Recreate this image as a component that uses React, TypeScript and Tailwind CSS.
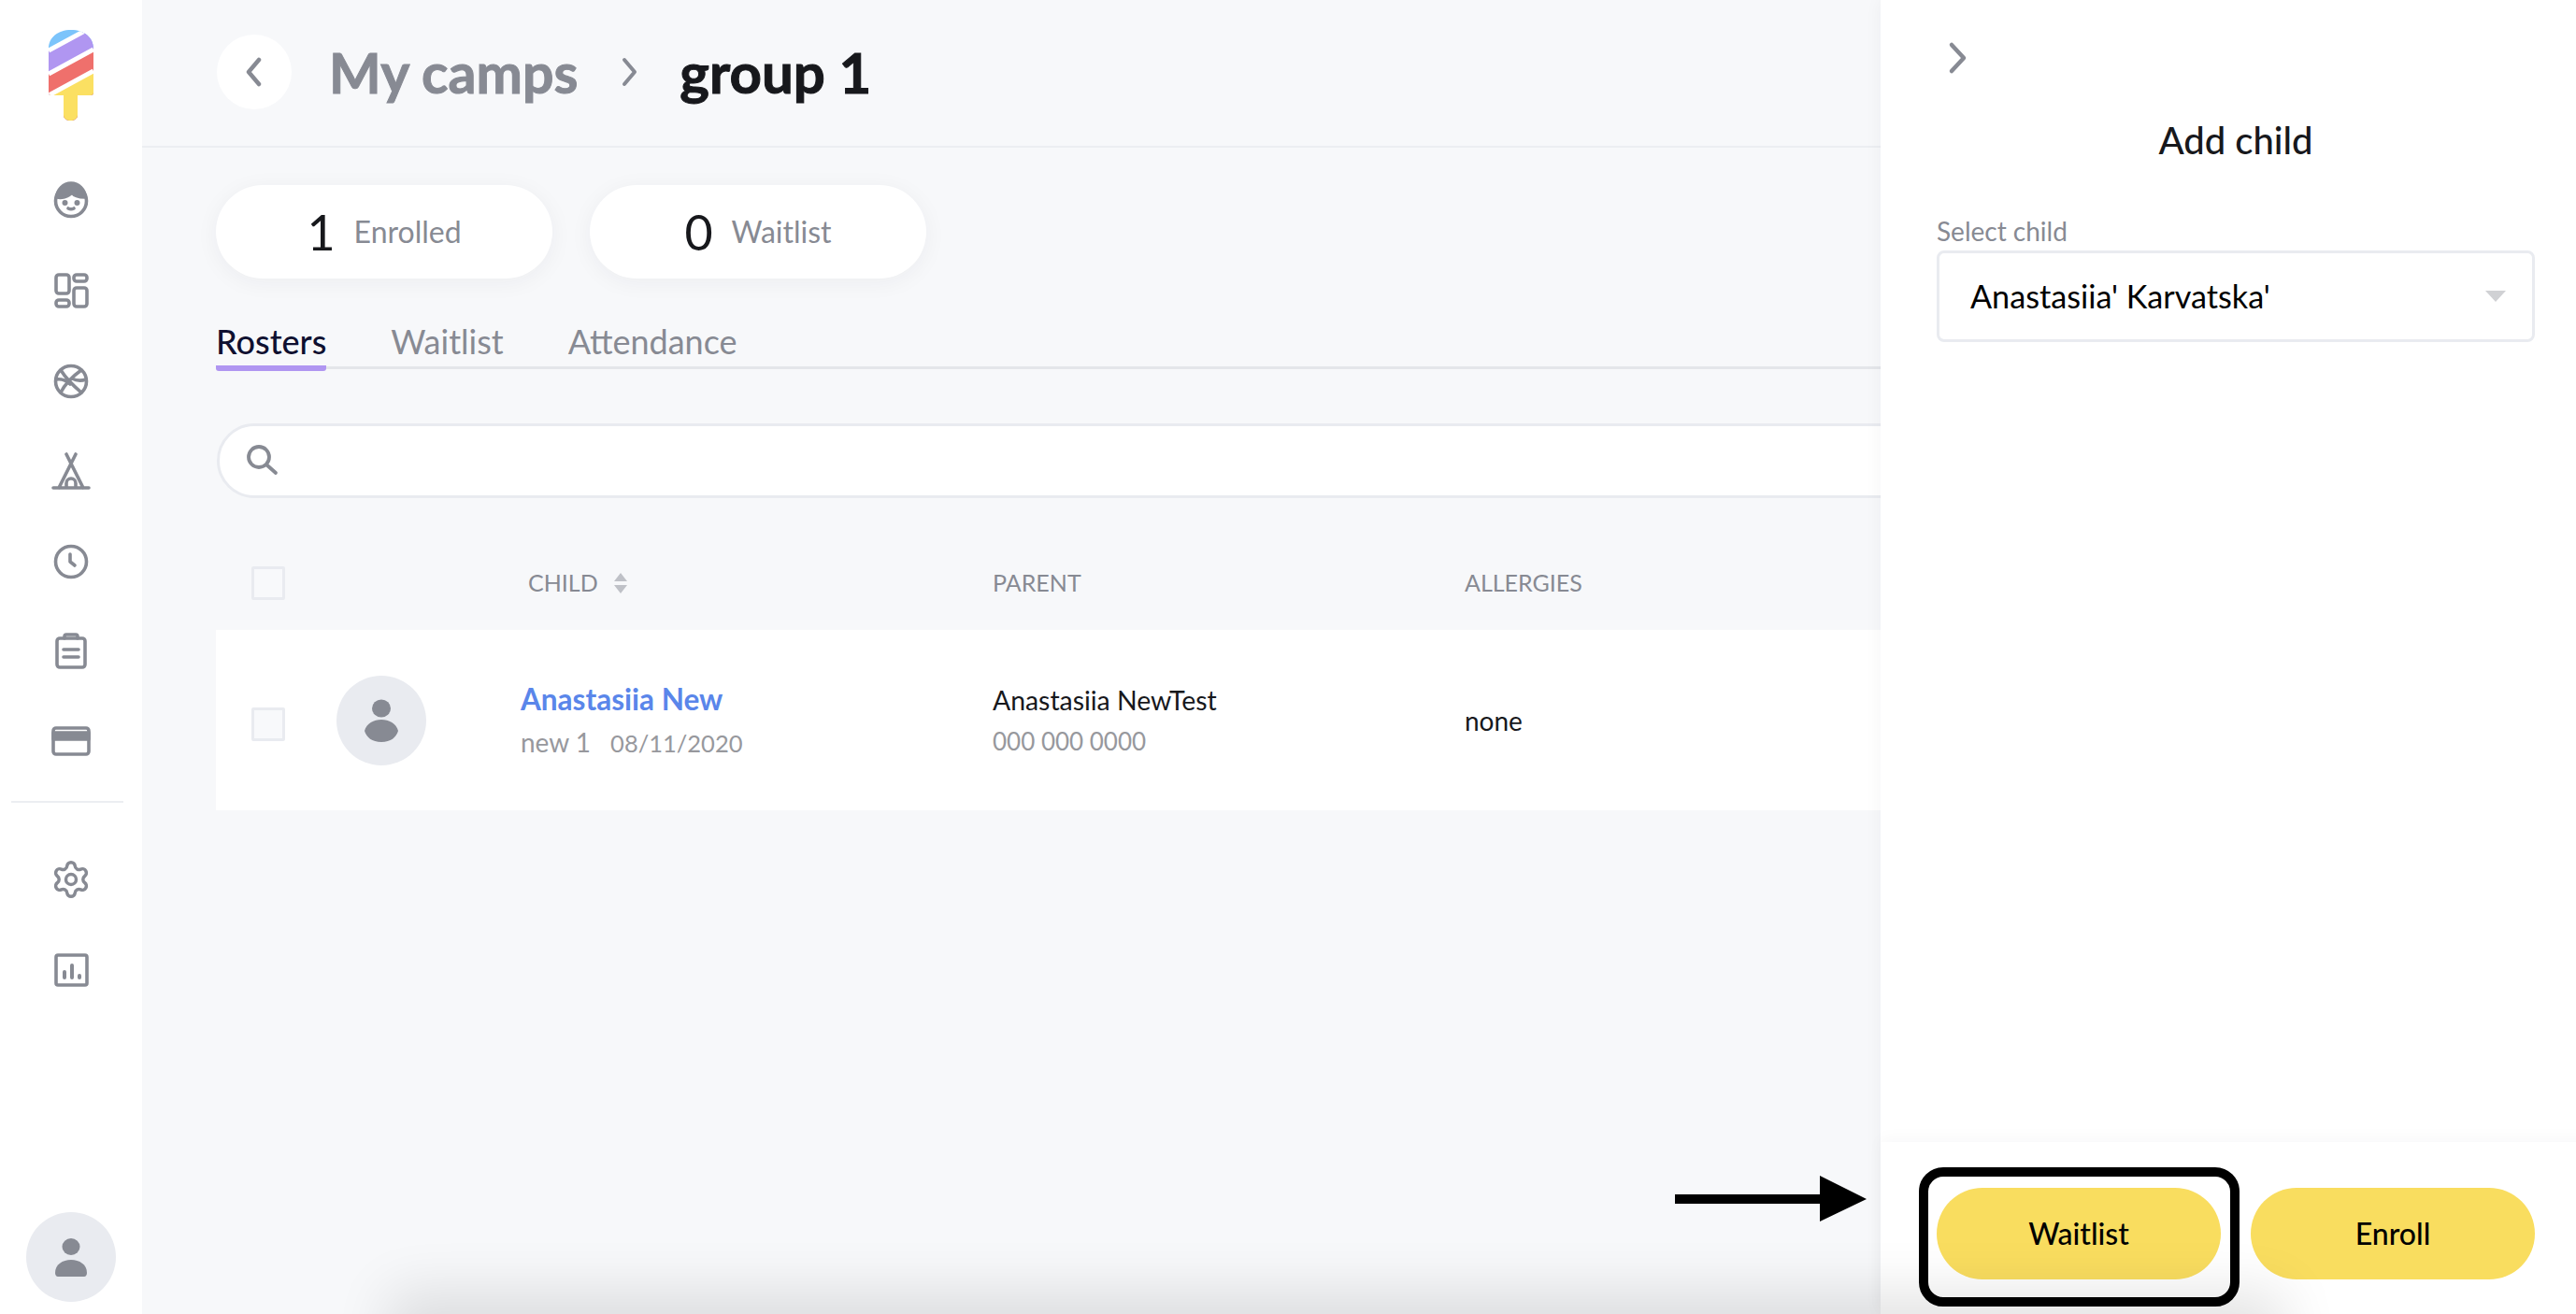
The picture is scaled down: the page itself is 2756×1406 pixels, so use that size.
import React from "react";
import { Settings } from "lucide-react";

const font = { fontFamily: '"Lato", "Noto Sans", sans-serif' };

function Ico({ children }: { children: React.ReactNode }) {
  return (
    <svg width="44" height="44" viewBox="0 0 44 44" fill="none" stroke="#878a93" strokeWidth="3.600" strokeLinecap="round" strokeLinejoin="round">
      {children}
    </svg>
  );
}

function Logo() {
  return (
    <svg width="48" height="97" viewBox="0 0 48 97" fill="none">
      <defs>
        <clipPath id="body">
          <path d="M0 20C0 8 10 0 24 0s24 8 24 20v47a3 3 0 0 1-3 3H31v21c0 8-15 8-15 0V70H3a3 3 0 0 1-3-3Z" />
        </clipPath>
      </defs>
      <g clipPath="url(#body)">
        <rect width="48" height="97" fill="#7cc4fb" />
        <path d="M0 22 48 -4V97H0Z" fill="#b096f1" />
        <path d="M0 47 48 21V97H0Z" fill="#ef706c" />
        <path d="M0 70 48 44V97H0Z" fill="#fbe062" />
        <path d="M0 22 48 -4M0 47 48 21M0 70 48 44" stroke="#fff" strokeWidth="5" />
      </g>
    </svg>
  );
}

const navTop = [
  <Ico key="face">
    <circle cx="22" cy="22" r="16.500" />
    <path d="M7 18c4 1 12 0 16-5 2 3 7 5 14 5 0-8-7-15-15-15S7 10 7 18Z" fill="#878a93" />
    <circle cx="15.500" cy="24" r="1.200" fill="#878a93" />
    <circle cx="28.500" cy="24" r="1.200" fill="#878a93" />
    <path d="M19 30q3 1.500 6 0" />
  </Ico>,
  <Ico key="grid">
    <rect x="6" y="5" width="14" height="20" rx="3" />
    <rect x="6" y="32" width="14" height="7" rx="3" />
    <rect x="25" y="5" width="14" height="7" rx="3" />
    <rect x="25" y="19" width="14" height="20" rx="3" />
  </Ico>,
  <Ico key="ball">
    <circle cx="22" cy="22" r="16.500" />
    <path d="M11 10c5 8 15 18 22 24M33 10C26 15 16 24 11 34M6 20c6-1 12 2 15 5M23 19c4 2 9 3 15 1" />
  </Ico>,
  <Ico key="tent">
    <path d="M3 40H41M27 4 9 40M17 4l18 36M17 40V35a5 5 0 0 1 10 0V40" />
  </Ico>,
  <Ico key="clock">
    <circle cx="22" cy="22" r="16.500" />
    <path d="M21 14v8l5 4" />
  </Ico>,
  <Ico key="clip">
    <rect x="7" y="8" width="30" height="31" rx="3" />
    <path d="M15 8V6a2 2 0 0 1 2-2h10a2 2 0 0 1 2 2v2M14 20H30M14 28H30" />
  </Ico>,
  <Ico key="card">
    <rect x="3" y="8" width="38" height="28" rx="3" />
    <rect x="3" y="13" width="38" height="7" fill="#878a93" />
  </Ico>,
];

const navBottom = [
  <Settings key="gear" size={44} color="#878a93" strokeWidth={1.900} />,
  <Ico key="chart">
    <rect x="6" y="6" width="33" height="32" rx="2" />
    <path d="M15 24v6M23 17v13M31 28v2" strokeWidth="4" />
  </Ico>,
];

function Checkbox() {
  return <div className="w-9 h-9 border-[3px] border-[#e9ebf0] bg-[#f8f9fb] rounded-[2px]" />;
}

function Pill({ n, label }: { n: string; label: string }) {
  return (
    <div className="w-[360px] h-[100px] rounded-[50px] bg-white shadow-[0_4px_24px_rgba(30,35,60,0.05)] flex items-center justify-center gap-[20px]">
      <span className="text-[52px] leading-none text-[#17181c]">{n}</span>
      <span className="text-[32px] leading-none text-[#878a93]">{label}</span>
    </div>
  );
}

export default function App() {
  return (
    <div className="relative flex w-[2756px] h-[1406px] overflow-hidden bg-white" style={font}>
      <aside className="w-[152px] shrink-0 bg-white flex flex-col items-center relative">
        <div className="mt-[32px] h-[97px]"><Logo /></div>
        <nav className="mt-[64px] flex flex-col items-center gap-[52.400px]">{navTop}</nav>
        <div className="w-[120px] h-[2px] bg-[#eceef2] mt-[42px] mr-[8px]" />
        <nav className="mt-[60px] flex flex-col items-center gap-[53px]">{navBottom}</nav>
        <div className="mt-auto mb-[13px] w-[96px] h-[96px] rounded-full bg-[#e9ebf0] flex items-center justify-center">
          <svg width="34" height="41" viewBox="0 0 34 41" fill="#878a93">
            <ellipse cx="17" cy="9" rx="9.500" ry="9" />
            <path d="M0 37c0-9 8-14 17-14s17 5 17 14c0 2-1 4-3 4H3c-2 0-3-2-3-4Z" />
          </svg>
        </div>
      </aside>

      <main className="w-[1860px] shrink-0 bg-[#f7f8fa] overflow-hidden">
        <header className="h-[158px] border-b-2 border-[#eceef2] pl-[80px] pb-[2px] flex items-center">
          <div className="w-[80px] h-[80px] rounded-full bg-white flex items-center justify-center">
            <svg width="24" height="32" viewBox="0 0 24 32" fill="none" stroke="#878a93" strokeWidth="4.500" strokeLinecap="round" strokeLinejoin="round"><path d="M17 3 6 16l11 13" /></svg>
          </div>
          <span className="ml-[40px] text-[59px] font-bold text-[#878a93] leading-none [-webkit-text-stroke:1px_#878a93]">My camps</span>
          <svg className="ml-[44px]" width="24" height="32" viewBox="0 0 24 32" fill="none" stroke="#878a93" strokeWidth="4" strokeLinecap="round" strokeLinejoin="round"><path d="m6 3 11 13L6 29" /></svg>
          <span className="ml-[41px] text-[60px] font-bold text-[#17181c] leading-none [-webkit-text-stroke:1px_#17181c]">group 1</span>
        </header>

        <div className="pl-[79px] pt-[40px] flex gap-[40px]">
          <Pill n="1" label="Enrolled" />
          <Pill n="0" label="Waitlist" />
        </div>

        <div className="ml-[79px] mt-[44px] flex gap-[69px] border-b-[3px] border-[#e4e6ea] h-[53px] text-[36px] leading-[46px] text-[#878a93]">
          <div className="h-[55px] border-b-[6px] border-[#b096f1] rounded-b-[3px] text-[#0f1030] font-medium">Rosters</div>
          <div>Waitlist</div>
          <div>Attendance</div>
        </div>

        <div className="ml-[80px] mt-[58px] w-[1900px] h-[80px] rounded-full bg-white border-[3px] border-[#e9ebf0] flex items-center pl-[28px]">
          <svg width="36" height="36" viewBox="0 0 36 36" fill="none" stroke="#878a93" strokeWidth="3.800" strokeLinecap="round"><circle cx="14" cy="14" r="11" /><path d="m23 23 9 8" /></svg>
        </div>

        <div className="ml-[79px] mt-[59px] h-[64px] flex items-center text-[25px] text-[#878a93]">
          <div className="ml-[38px]"><Checkbox /></div>
          <div className="ml-[260px] flex items-center gap-[16px] w-[497px]">
            <span>CHILD</span>
            <svg width="16" height="24" viewBox="0 0 16 24" fill="#bfc1c7"><path d="M8 1 15 10H1ZM8 23 1 14h14Z" /></svg>
          </div>
          <span className="w-[505px]">PARENT</span>
          <span>ALLERGIES</span>
        </div>

        <div className="ml-[79px] mt-[18px] h-[193px] bg-white flex items-center">
          <div className="ml-[38px] mt-[8px]"><Checkbox /></div>
          <div className="ml-[55px] w-[96px] h-[96px] rounded-full bg-[#e9ebf0] flex items-center justify-center">
            <svg width="36" height="46" viewBox="0 0 36 46" fill="#878a93">
              <ellipse cx="18" cy="10" rx="10" ry="9.500" />
              <path d="M0 34C2 26 10 22 18 22S34 26 36 34C34 41 28 46 18 46S2 41 0 34Z" />
            </svg>
          </div>
          <div className="ml-[101px] mt-[4px] w-[505px]">
            <div className="text-[31.500px] leading-[40px] font-bold text-[#5a86ea]">Anastasiia New</div>
            <div className="mt-[8px] leading-[36px] text-[#97989d] whitespace-pre">
              <span className="text-[28px]">new 1</span>
              <span className="text-[25.500px] ml-[21px]">08/11/2020</span>
            </div>
          </div>
          <div className="w-[505px] mb-[2px]">
            <div className="text-[28.400px] leading-[40px] text-[#17181c]">Anastasiia NewTest</div>
            <div className="mt-[6px] text-[26px] leading-[36px] text-[#97989d]">000 000 0000</div>
          </div>
          <div className="text-[28px] text-[#17181c]">none</div>
        </div>
      </main>

      <section className="relative flex-1 bg-white flex flex-col shadow-[-2px_0_16px_rgba(30,35,60,0.04)]">
        <div className="pl-[71px] pt-[44px]">
          <svg width="24" height="36" viewBox="0 0 24 36" fill="none" stroke="#878a93" strokeWidth="4.500" strokeLinecap="round" strokeLinejoin="round"><path d="m5 4 13 14L5 32" /></svg>
        </div>
        <h2 className="mt-[44px] text-center text-[40px] leading-[52px] font-medium text-[#17181c]">Add child</h2>
        <div className="mx-[60px] mt-[53px] flex-1">
          <div className="text-[28px] leading-[36px] text-[#878a93]">Select child</div>
          <div className="mt-[3px] h-[98px] rounded-[8px] border-[3px] border-[#e9ebf0] flex items-center justify-between pl-[33px] pr-[28px]">
            <span className="text-[34.200px] text-black">Anastasiia' Karvatska'</span>
            <svg width="22" height="12" viewBox="0 0 22 12" fill="#d0d1d4"><path d="M0 0H22L11 12Z" /></svg>
          </div>
        </div>
        <div className="h-[184px] px-[60px] pt-[49px] flex gap-[32px] shadow-[0_-4px_16px_rgba(30,35,60,0.03)]">
          <button className="w-[304px] h-[98px] rounded-full bg-[#f9dd5f] text-[32px] font-medium text-black">Waitlist</button>
          <button className="w-[304px] h-[98px] rounded-full bg-[#f9dd5f] text-[32px] font-medium text-black">Enroll</button>
        </div>
      </section>

      <div className="absolute left-[440px] w-[1980px] bottom-[-40px] h-[40px] shadow-[0_0_60px_24px_rgba(0,0,0,0.11)]" />

      <div className="absolute left-[2053px] top-[1249px] w-[343px] h-[149px] border-[10px] border-black rounded-[26px]" />
      <svg className="absolute left-[1792px] top-[1258px]" width="205" height="49" viewBox="0 0 205 49" fill="#000"><path d="M0 20H155V0L205 25 155 49V30H0Z" /></svg>
    </div>
  );
}
